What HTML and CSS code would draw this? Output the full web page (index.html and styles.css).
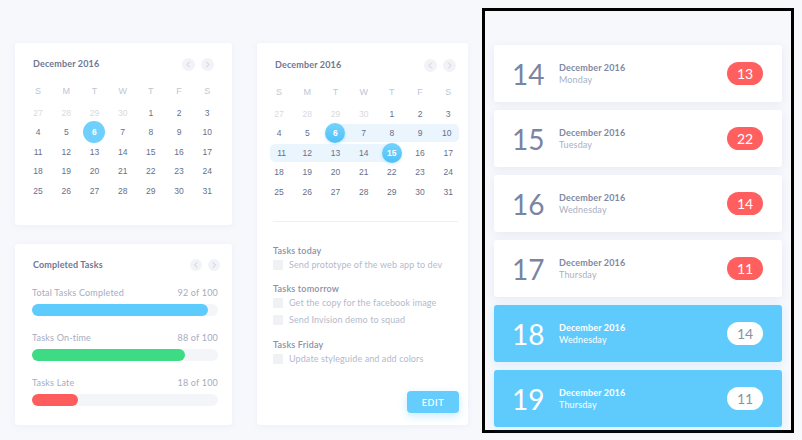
FILE: index.html
```html
<!DOCTYPE html>
<html>
<head>
<meta charset="utf-8">
<link rel="stylesheet" href="styles.css">
</head>
<body>
<div class="page">
  <div class="col-left">
    <section class="card cal-card">
      <header class="card-head">
        <h2 class="title">December 2016</h2>
        <div class="nav">
          <span class="nav-btn"><svg viewBox="0 0 13 13" width="13" height="13"><polyline points="7.5,4 5,6.5 7.5,9" /></svg></span>
          <span class="nav-btn"><svg viewBox="0 0 13 13" width="13" height="13"><polyline points="5.5,4 8,6.5 5.5,9" /></svg></span>
        </div>
      </header>
      <div class="weekdays">
        <span>S</span><span>M</span><span>T</span><span>W</span><span>T</span><span>F</span><span>S</span>
      </div>
      <div class="dates">
        <span class="d muted">27</span><span class="d muted">28</span><span class="d muted">29</span><span class="d muted">30</span><span class="d">1</span><span class="d">2</span><span class="d">3</span>
        <span class="d">4</span><span class="d">5</span><span class="d"><b class="sel">6</b></span><span class="d">7</span><span class="d">8</span><span class="d">9</span><span class="d">10</span>
        <span class="d">11</span><span class="d">12</span><span class="d">13</span><span class="d">14</span><span class="d">15</span><span class="d">16</span><span class="d">17</span>
        <span class="d">18</span><span class="d">19</span><span class="d">20</span><span class="d">21</span><span class="d">22</span><span class="d">23</span><span class="d">24</span>
        <span class="d">25</span><span class="d">26</span><span class="d">27</span><span class="d">28</span><span class="d">29</span><span class="d">30</span><span class="d">31</span>
      </div>
    </section>

    <section class="card stats-card">
      <header class="card-head stats-head">
        <h2 class="title">Completed Tasks</h2>
        <div class="nav nav-tight">
          <span class="nav-btn sm"><svg viewBox="0 0 12 12" width="12" height="12"><polyline points="7,3.5 4.5,6 7,8.5" /></svg></span>
          <span class="nav-btn sm"><svg viewBox="0 0 12 12" width="12" height="12"><polyline points="5,3.5 7.5,6 5,8.5" /></svg></span>
        </div>
      </header>
      <div class="stat">
        <div class="stat-row"><span>Total Tasks Completed</span><span>92 of 100</span></div>
        <div class="bar"><div class="fill blue" style="width:94.6%"></div></div>
      </div>
      <div class="stat">
        <div class="stat-row"><span>Tasks On-time</span><span>88 of 100</span></div>
        <div class="bar"><div class="fill green" style="width:82.3%"></div></div>
      </div>
      <div class="stat">
        <div class="stat-row"><span>Tasks Late</span><span>18 of 100</span></div>
        <div class="bar"><div class="fill red" style="width:24.7%"></div></div>
      </div>
    </section>
  </div>

  <section class="card mid-card">
    <header class="card-head mid-head">
      <h2 class="title">December 2016</h2>
      <div class="nav">
        <span class="nav-btn"><svg viewBox="0 0 13 13" width="13" height="13"><polyline points="7.5,4 5,6.5 7.5,9" /></svg></span>
        <span class="nav-btn"><svg viewBox="0 0 13 13" width="13" height="13"><polyline points="5.5,4 8,6.5 5.5,9" /></svg></span>
      </div>
    </header>
    <div class="weekdays">
      <span>S</span><span>M</span><span>T</span><span>W</span><span>T</span><span>F</span><span>S</span>
    </div>
    <div class="dates">
      <span class="d muted">27</span><span class="d muted">28</span><span class="d muted">29</span><span class="d muted">30</span><span class="d">1</span><span class="d">2</span><span class="d">3</span>
      <span class="d">4</span><span class="d">5</span><span class="d rng-start"><b class="sel sel-dark">6</b></span><span class="d rng">7</span><span class="d rng">8</span><span class="d rng">9</span><span class="d rng row-end">10</span>
      <span class="d rng row-start">11</span><span class="d rng">12</span><span class="d rng">13</span><span class="d rng">14</span><span class="d rng-end"><b class="sel sel-dark">15</b></span><span class="d">16</span><span class="d">17</span>
      <span class="d">18</span><span class="d">19</span><span class="d">20</span><span class="d">21</span><span class="d">22</span><span class="d">23</span><span class="d">24</span>
      <span class="d">25</span><span class="d">26</span><span class="d">27</span><span class="d">28</span><span class="d">29</span><span class="d">30</span><span class="d">31</span>
    </div>
    <div class="divider"></div>
    <div class="task-list">
      <div class="group">
        <h3 class="group-title">Tasks today</h3>
        <div class="task"><span class="check"></span>Send prototype of the web app to dev</div>
      </div>
      <div class="group">
        <h3 class="group-title">Tasks tomorrow</h3>
        <div class="task"><span class="check"></span>Get the copy for the facebook image</div>
        <div class="task"><span class="check"></span>Send Invision demo to squad</div>
      </div>
      <div class="group">
        <h3 class="group-title">Tasks Friday</h3>
        <div class="task"><span class="check"></span>Update styleguide and add colors</div>
      </div>
    </div>
    <button class="edit-btn">EDIT</button>
  </section>

  <div class="frame">
    <div class="day">
      <span class="day-num">14</span>
      <div class="day-text"><span class="day-month">December 2016</span><span class="day-name">Monday</span></div>
      <span class="badge">13</span>
    </div>
    <div class="day">
      <span class="day-num">15</span>
      <div class="day-text"><span class="day-month">December 2016</span><span class="day-name">Tuesday</span></div>
      <span class="badge">22</span>
    </div>
    <div class="day">
      <span class="day-num">16</span>
      <div class="day-text"><span class="day-month">December 2016</span><span class="day-name">Wednesday</span></div>
      <span class="badge">14</span>
    </div>
    <div class="day">
      <span class="day-num">17</span>
      <div class="day-text"><span class="day-month">December 2016</span><span class="day-name">Thursday</span></div>
      <span class="badge">11</span>
    </div>
    <div class="day active">
      <span class="day-num">18</span>
      <div class="day-text"><span class="day-month">December 2016</span><span class="day-name">Wednesday</span></div>
      <span class="badge">14</span>
    </div>
    <div class="day active">
      <span class="day-num">19</span>
      <div class="day-text"><span class="day-month">December 2016</span><span class="day-name">Thursday</span></div>
      <span class="badge">11</span>
    </div>
  </div>
</div>
</body>
</html>
```

FILE: styles.css
```css
* { box-sizing: border-box; }
html, body { margin: 0; padding: 0; }
body {
  width: 802px;
  height: 440px;
  overflow: hidden;
  background: #f7f8fc;
  font-family: Lato, "Open Sans", "Liberation Sans", sans-serif;
  color: #6e7691;
}
.page {
  display: flex;
  align-items: flex-start;
  padding: 8px 0 0 15px;
}
.col-left {
  width: 217px;
  margin-top: 35px;
  display: flex;
  flex-direction: column;
  gap: 19px;
}
.card {
  background: #fff;
  border-radius: 3px;
  box-shadow: 0 1px 6px rgba(120, 135, 175, 0.08);
}
.cal-card {
  height: 182px;
  padding: 14px 9px 0;
}
.card-head {
  display: flex;
  align-items: center;
  justify-content: space-between;
  height: 14px;
  padding: 0 9px;
}
.title {
  margin: 0;
  font-size: 9px;
  font-weight: 700;
  line-height: 14px;
  color: #6f7792;
  letter-spacing: 0.15px;
}
.nav { display: flex; gap: 6px; }
.nav-tight { gap: 6px; margin-right: -2px; }
.nav-btn {
  width: 13px;
  height: 13px;
  border-radius: 50%;
  background: #f2f3f7;
  display: flex;
}
.nav-btn.sm { width: 12px; height: 12px; }
.nav-btn svg polyline {
  fill: none;
  stroke: #c9ced9;
  stroke-width: 1;
  stroke-linecap: round;
  stroke-linejoin: round;
}
.weekdays, .dates {
  display: grid;
  grid-template-columns: repeat(7, 28.2px);
}
.weekdays {
  margin-top: 11px;
  margin-bottom: 3.5px;
}
.weekdays span {
  height: 18px;
  display: flex;
  align-items: center;
  justify-content: center;
  font-family: "Liberation Sans", Arial, sans-serif;
  font-size: 9px;
  color: #c0c6d3;
}
.dates { row-gap: 1.5px; }
.d {
  height: 18px;
  display: flex;
  align-items: center;
  justify-content: center;
  font-family: "Liberation Sans", Arial, sans-serif;
  font-size: 8.5px;
  color: #666f8c;
}
.d.muted { color: #d6dae3; }
.sel {
  flex: none;
  width: 22px;
  height: 22px;
  border-radius: 50%;
  background: #6fcffd;
  color: #fff;
  font-weight: 700;
  display: flex;
  align-items: center;
  justify-content: center;
  position: relative;
}
.sel-dark {
  width: 20px;
  height: 20px;
  background: linear-gradient(180deg, #74d3fe 0%, #4fc0f6 100%);
  box-shadow: 0 1px 3px rgba(79, 192, 246, 0.35);
}
.rng { background: #eaf5fe; }
.rng-start { background: linear-gradient(90deg, transparent 50%, #eaf5fe 50%); }
.rng-end { background: linear-gradient(90deg, #eaf5fe 50%, transparent 50%); }
.row-end { border-radius: 0 5px 5px 0; margin-right: 3px; }
.row-start { border-radius: 5px 0 0 5px; margin-left: 5px; }

.stats-card {
  height: 181px;
  padding: 14px 14px 0 17px;
}
.stats-head { padding: 0 0 0 1px; }
.stat { margin-top: 15px; }
.stat + .stat { margin-top: 16px; }
.stat-row {
  display: flex;
  justify-content: space-between;
  font-size: 9px;
  line-height: 12px;
  color: #a5acbf;
  letter-spacing: 0.2px;
}
.bar {
  margin-top: 5px;
  height: 12px;
  border-radius: 6px;
  background: #f4f5f8;
}
.fill { height: 12px; border-radius: 6px; }
.fill.blue { background: #5ecbfd; }
.fill.green { background: #3ddc84; }
.fill.red { background: #ff5d5d; }

.mid-card {
  width: 211px;
  height: 382px;
  margin-top: 35px;
  margin-left: 25px;
  padding: 15px 8px 0;
  display: flex;
  flex-direction: column;
}
.mid-head { padding: 0 4px 0 10px; }
.divider {
  margin: 20px 2px 0 8px;
  height: 1px;
  background: #eef0f4;
}
.task-list {
  padding-left: 8px;
  margin-top: 23px;
}
.group + .group { margin-top: 12.5px; }
.group-title {
  margin: 0 0 2px;
  font-size: 9px;
  font-weight: 600;
  line-height: 12px;
  color: #8a91a8;
  letter-spacing: 0.2px;
}
.task {
  display: flex;
  align-items: center;
  gap: 6px;
  font-size: 9px;
  line-height: 12px;
  color: #b4bacb;
  letter-spacing: 0.1px;
}
.task + .task { margin-top: 5px; }
.check {
  width: 10px;
  height: 10px;
  border-radius: 1px;
  background: #eff1f5;
  flex: none;
}
.edit-btn {
  align-self: flex-end;
  margin: auto 1px 12px 0;
  width: 52px;
  height: 22px;
  border: 0;
  border-radius: 4px;
  background: #64cdfd;
  box-shadow: 0 3px 8px rgba(95, 200, 253, 0.35);
  color: #fff;
  font-family: Lato, sans-serif;
  font-size: 9px;
  font-weight: 600;
  letter-spacing: 0.6px;
  padding: 0;
}

.frame {
  width: 312px;
  height: 425px;
  margin-left: 14px;
  border: 3px solid #000;
  padding: 34px 9px 0;
  display: flex;
  flex-direction: column;
  gap: 8px;
}
.day {
  height: 57px;
  flex: none;
  background: #fff;
  border-radius: 3px;
  box-shadow: 0 2px 8px rgba(120, 135, 175, 0.12);
  display: flex;
  align-items: center;
  padding: 0 19px 0 18px;
}
.day-num {
  width: 47px;
  font-size: 28px;
  font-weight: 400;
  line-height: 1;
  color: #7a84a3;
}
.day-text {
  display: flex;
  flex-direction: column;
  flex: 1;
}
.day-month {
  font-size: 9px;
  font-weight: 700;
  line-height: 12px;
  color: #8089a4;
  letter-spacing: 0.15px;
}
.day-name {
  font-size: 9px;
  line-height: 12px;
  color: #a9b0c3;
  letter-spacing: 0.15px;
}
.badge {
  width: 36px;
  height: 23px;
  border-radius: 12px;
  background: #ff5f5f;
  color: #fff;
  font-size: 14px;
  line-height: 23px;
  text-align: center;
}
.day.active { background: #5fcbfd; box-shadow: 0 2px 8px rgba(95, 200, 253, 0.2); }
.day.active .day-num,
.day.active .day-month,
.day.active .day-name { color: #fff; }
.day.active .badge { background: #fff; color: #8a92a8; }
```
